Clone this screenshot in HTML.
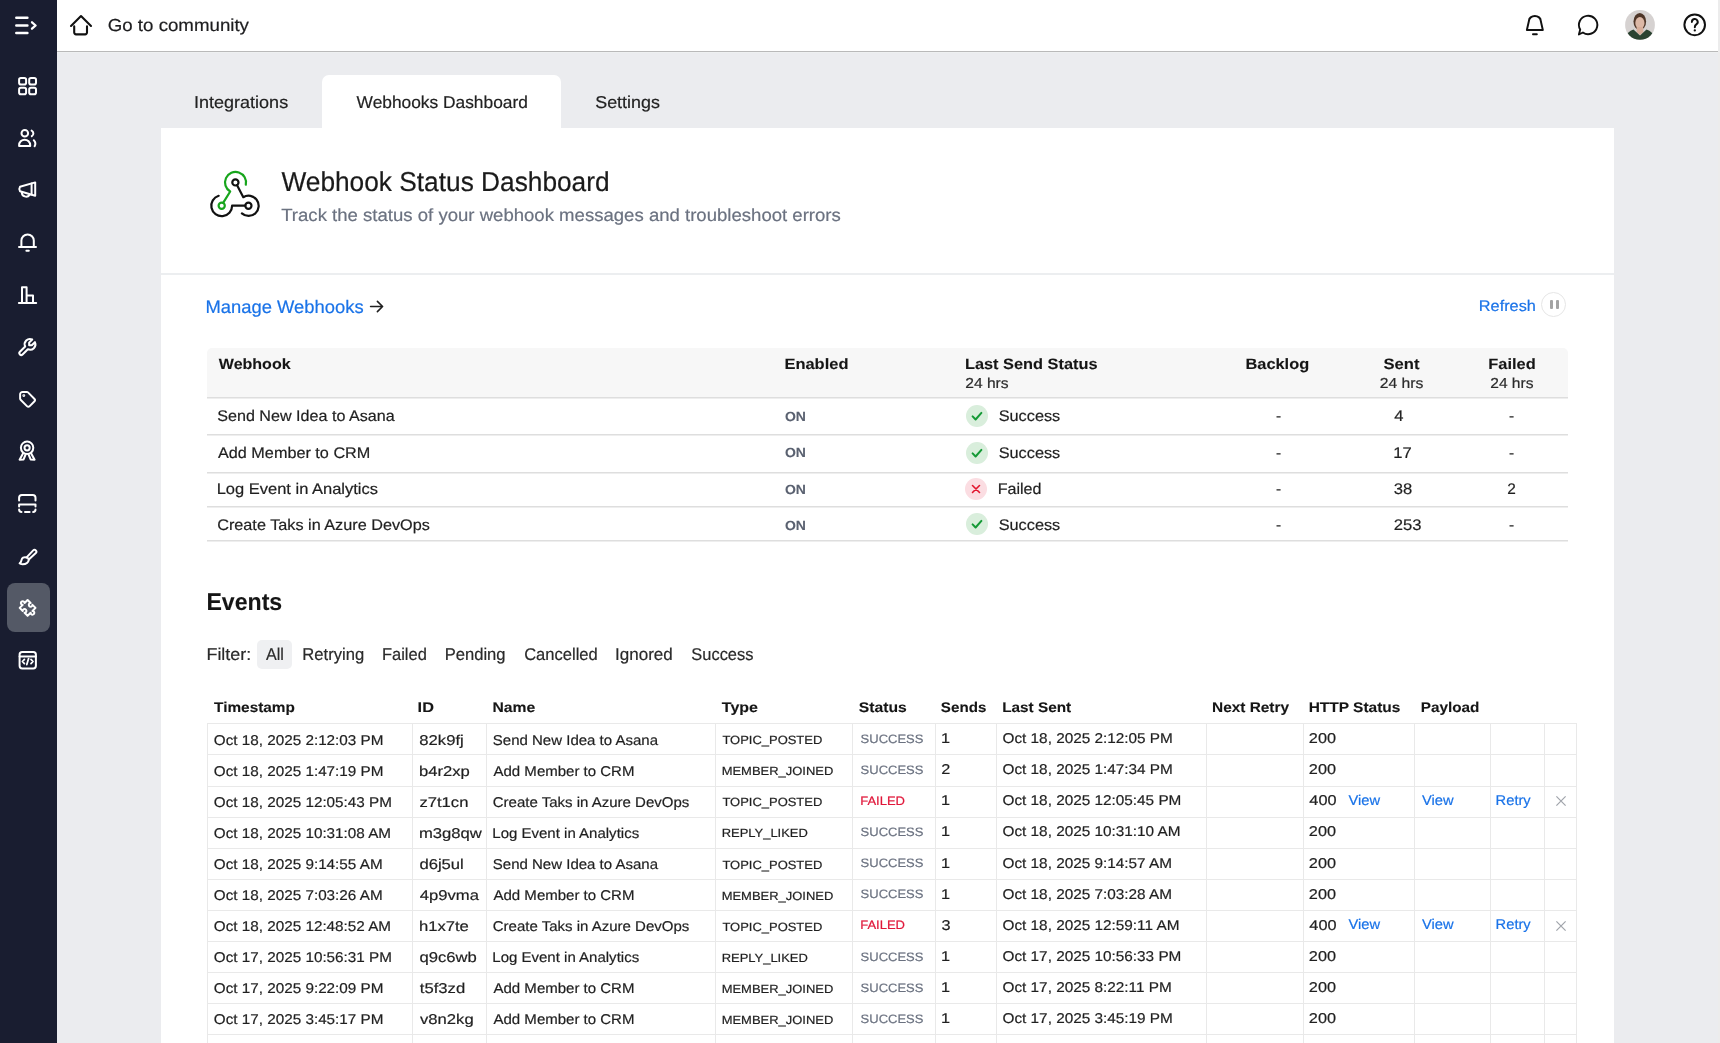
<!DOCTYPE html>
<html><head><meta charset="utf-8"><title>Webhooks Dashboard</title><style>
*{margin:0;padding:0;box-sizing:border-box}
html,body{width:1720px;height:1043px;overflow:hidden;background:#ebecef;font-family:"Liberation Sans", sans-serif;}
.tx{will-change:transform;text-rendering:geometricPrecision;font-family:"Liberation Sans", sans-serif;pointer-events:none}
.r{position:absolute;}
svg{position:absolute;overflow:visible}
</style></head>
<body>
<div class="r" style="left:0px;top:0px;width:57px;height:1043px;background:#191d30"></div>
<div class="r" style="left:7px;top:583px;width:43px;height:49px;background:#545966;border-radius:8px"></div>
<div class="r" style="left:57px;top:0px;width:1663px;height:51px;background:#fff"></div>
<div class="r" style="left:57px;top:51px;width:1663px;height:1px;background:#b9b9b9"></div>
<div class="r" style="left:57px;top:52px;width:1663px;height:1px;background:#eef0f1"></div>
<div class="r" style="left:1718px;top:0px;width:2px;height:1043px;background:#ececec"></div>

<svg style="left:0;top:0" width="57" height="700" viewBox="0 0 57 700"><g fill="none" stroke="#fff" stroke-linecap="round" stroke-linejoin="round" stroke-width="2.5"><path d="M16.3 17.7H27.4M16.3 25.5H27.4M16.3 33H27.4"/><path d="M32 22.3l3.6 3.2-3.6 3.2" stroke-width="2.3"/></g><g fill="none" stroke="#fff" stroke-linecap="round" stroke-linejoin="round" stroke-width="2"><rect x="19.1" y="77.9" width="7" height="6.6" rx="1.8"/><rect x="29.2" y="77.9" width="6.8" height="6.6" rx="1.8"/><rect x="19.1" y="87.7" width="7" height="6.6" rx="1.8"/><rect x="29.2" y="87.7" width="6.8" height="6.6" rx="1.8"/></g><g fill="none" stroke="#fff" stroke-linecap="round" stroke-linejoin="round" stroke-width="2"><circle cx="24.8" cy="133.2" r="3.3"/><path d="M19.1 146.1V145.2A5.55 5.55 0 0 1 30.2 145.2V146.1Z"/><path d="M31.6 130.6A3.2 3.2 0 0 1 31.8 136.2"/><path d="M33.8 140.2A5 5 0 0 1 34.6 146.2"/></g><g fill="none" stroke="#fff" stroke-linecap="round" stroke-linejoin="round" stroke-width="2"><path d="M20 186.8L35.2 182.4V195.8L20 191.3Q18.6 189 20 186.8Z"/><path d="M31.6 183.6V194.6"/><path d="M21.8 192.4A4.3 4.3 0 0 0 29.6 194.8"/></g><g fill="none" stroke="#fff" stroke-linecap="round" stroke-linejoin="round" stroke-width="2"><path d="M21.4 247V240.6A6.2 6.2 0 0 1 33.8 240.6V247"/><path d="M19 247H36"/><path d="M26.4 250.7H28.8"/></g><g fill="none" stroke="#fff" stroke-width="2" stroke-linejoin="round"><path d="M18.9 303.1H36.2" stroke-linecap="round"/><path d="M22 303V287.2H26.6V303"/><path d="M26.6 295.6H33V303"/></g><g transform="translate(27.4 347) scale(-0.88 0.88) translate(-12 -12)" fill="none" stroke="#fff" stroke-linecap="round" stroke-linejoin="round" stroke-width="2.3"><path d="M7 10h3v-3l-3.5 -3.5a6 6 0 0 1 8 8l6 6a2 2 0 0 1 -3 3l-6 -6a6 6 0 0 1 -8 -8l3.5 3.5"/></g><g transform="translate(27.5 399.3) scale(0.82) translate(-12 -12)" fill="none" stroke="#fff" stroke-linecap="round" stroke-linejoin="round" stroke-width="2.4"><circle cx="7.5" cy="7.5" r="0.6" fill="#fff"/><path d="M3 6v5.172a2 2 0 0 0 .586 1.414l7.71 7.71a2.41 2.41 0 0 0 3.408 0l5.592-5.592a2.41 2.41 0 0 0 0-3.408l-7.71-7.71a2 2 0 0 0-1.414-.586h-5.172a3 3 0 0 0-3 3z"/></g><g fill="none" stroke="#fff" stroke-linecap="round" stroke-linejoin="round" stroke-width="2"><circle cx="27.1" cy="447.8" r="6.2"/><circle cx="27.1" cy="447.8" r="2.6"/><path d="M23.4 452.8L19.6 459.7L23.6 459.4L25.4 455"/><path d="M30.8 452.8L34.6 459.7L30.6 459.4L28.8 455"/></g><g fill="none" stroke="#fff" stroke-linecap="round" stroke-linejoin="round" stroke-width="2"><path d="M19.1 500.4V497.8A2.8 2.8 0 0 1 21.9 495H32.7A2.8 2.8 0 0 1 35.5 497.8V500.4"/><path d="M19.1 506.4V504.4H35.5V506.4"/><path d="M19.1 509.6A2.4 2.4 0 0 0 21.5 512M33.1 512A2.4 2.4 0 0 0 35.5 509.6M25 512H29.6"/></g><g fill="none" stroke="#fff" stroke-linecap="round" stroke-linejoin="round" stroke-width="2"><path d="M26.6 557.4L33.2 550.4A1.8 1.8 0 0 1 35.8 553L28.8 559.6"/><path d="M26.6 557.4A3.6 3.6 0 0 1 28.8 559.6Q28.2 564.2 22.6 564.2Q20.2 564 19.6 563.4Q21.2 562.2 21.4 560.4Q22.2 556.4 26.6 557.4Z"/></g><g transform="translate(27.6 607.9) rotate(-45) scale(0.8) translate(-12 -12)" fill="none" stroke="#fff" stroke-linecap="round" stroke-linejoin="round" stroke-width="2.5"><path d="M5 5H10.4A2.3 2.3 0 1 1 13.6 5H19V10.4A2.3 2.3 0 1 0 19 13.6V19H13.6A2.3 2.3 0 1 1 10.4 19H5V13.6A2.3 2.3 0 1 0 5 10.4Z"/></g><g fill="none" stroke="#fff" stroke-linecap="round" stroke-linejoin="round" stroke-width="2"><rect x="19.6" y="652" width="16.3" height="16.4" rx="2.6"/><path d="M19.6 656.4H35.9"/><path d="M24.4 659.4L22.4 661.5L24.4 663.6M31 659.4L33 661.5L31 663.6M28.6 658.6L26.8 664.6" stroke-width="1.8"/></g></svg>
<svg style="left:0;top:0" width="120" height="52" viewBox="0 0 120 52"><g fill="none" stroke="#111" stroke-linecap="round" stroke-linejoin="round" stroke-width="2.1"><path d="M71 26L81 16L91 26"/><path d="M74.2 26.4V32.6A1.8 1.8 0 0 0 76 34.4H85.2A1.8 1.8 0 0 0 87 32.6V26.4"/></g></svg>
<svg style="left:1500px;top:0" width="220" height="52" viewBox="0 0 220 52"><g fill="none" stroke="#111" stroke-linecap="round" stroke-linejoin="round" stroke-width="2"><path d="M26.9 29.9H42.8L40.7 20.6A5.85 4.6 0 0 0 29 20.6Z"/><path d="M33 34.3H36.8"/></g><g fill="none" stroke="#111" stroke-linecap="round" stroke-linejoin="round" stroke-width="1.9"><path d="M82.9 32.5A9.2 9.2 0 1 0 80.2 29.6L78.9 34.5Z"/></g><defs><clipPath id="av"><circle cx="140" cy="24.9" r="14.9"/></clipPath></defs><g clip-path="url(#av)"><rect x="120" y="5" width="40" height="40" fill="#d6d2d1"/><ellipse cx="139.8" cy="21.5" rx="6.3" ry="8.6" fill="#4e3628"/><ellipse cx="139.9" cy="23" rx="4.6" ry="6" fill="#dcb8a6"/><path d="M136.8 27L143 27L143.5 32L140 35L136.5 32Z" fill="#d6ae9a"/><path d="M124 46Q125 31.5 133.5 29.5L140 35.5L146.5 29.5Q155 31.5 156 46Z" fill="#2b4331"/></g><g fill="none" stroke="#111" stroke-linecap="round" stroke-linejoin="round" stroke-width="2"><circle cx="194.7" cy="24.85" r="10.3"/><path d="M191.9 21.9A2.9 2.9 0 1 1 196.3 24.3Q194.8 25.3 194.8 27.3"/></g><circle cx="194.8" cy="30.4" r="1.15" fill="#111"/></svg>
<div class="r" style="left:322px;top:75px;width:239px;height:53px;background:#fff;border-radius:7px 7px 0 0"></div>



<div class="r" style="left:161px;top:128px;width:1453px;height:1000px;background:#fff"></div>
<div class="r" style="left:161px;top:273px;width:1453px;height:2px;background:#eceef0"></div>
<svg style="left:200px;top:165px" width="70" height="60" viewBox="0 0 70 60"><g fill="none" stroke-width="2.2" stroke-linecap="round" stroke-linejoin="round"><path d="M45.8 19.7A10.5 10.5 0 1 0 30.2 26.5L23.3 37.6" stroke="#17a51c"/><circle cx="21.7" cy="40.7" r="3.1" stroke="#17a51c"/><circle cx="35.4" cy="17.4" r="3.1" stroke="#111"/><path d="M37.1 20.3L43.3 32.2A10.1 10.1 0 1 1 41.9 48.4" stroke="#111"/><circle cx="48.4" cy="40.7" r="3.1" stroke="#111"/><path d="M45.3 40.7H32.1A10.4 10.4 0 1 1 18.7 30.8" stroke="#111"/></g></svg>



<svg style="left:368px;top:298px" width="18" height="18" viewBox="0 0 18 18"><path d="M2.6 8.5H14.6M9.4 3.4L14.6 8.5L9.4 13.6" fill="none" stroke="#1f1f1f" stroke-width="1.6" stroke-linecap="round" stroke-linejoin="round"/></svg>

<div class="r" style="left:1540.5px;top:291.5px;width:25px;height:25px;background:#fff;border:1px solid #e6e6e6;border-radius:50%"></div>
<div class="r" style="left:1550px;top:300px;width:3px;height:9px;background:#a3a3a3;border-radius:1px"></div>
<div class="r" style="left:1555.5px;top:300px;width:3px;height:9px;background:#a3a3a3;border-radius:1px"></div>
<div class="r" style="left:207px;top:348px;width:1361px;height:49px;background:#f7f7f7;border-radius:5px 5px 0 0"></div>
<div class="r" style="left:207px;top:397px;width:1361px;height:1px;background:#dedede"></div>
<div class="r" style="left:207px;top:398px;width:1361px;height:1px;background:#eeeeee"></div>
<div class="r" style="left:207px;top:434px;width:1361px;height:1px;background:#dedede"></div>
<div class="r" style="left:207px;top:435px;width:1361px;height:1px;background:#eeeeee"></div>
<div class="r" style="left:207px;top:472px;width:1361px;height:1px;background:#dedede"></div>
<div class="r" style="left:207px;top:473px;width:1361px;height:1px;background:#eeeeee"></div>
<div class="r" style="left:207px;top:506px;width:1361px;height:1px;background:#dedede"></div>
<div class="r" style="left:207px;top:507px;width:1361px;height:1px;background:#eeeeee"></div>
<div class="r" style="left:207px;top:540px;width:1361px;height:1px;background:#dedede"></div>
<div class="r" style="left:207px;top:541px;width:1361px;height:1px;background:#eeeeee"></div>











<svg style="left:966px;top:405px" width="22" height="22" viewBox="0 0 22 22"><circle cx="11" cy="11" r="11" fill="#d9eedc"/><path d="M6.6 11.4l3 3.1 5.8-6.6" fill="none" stroke="#159a36" stroke-width="2" stroke-linecap="round" stroke-linejoin="round"/></svg>






<svg style="left:966px;top:442px" width="22" height="22" viewBox="0 0 22 22"><circle cx="11" cy="11" r="11" fill="#d9eedc"/><path d="M6.6 11.4l3 3.1 5.8-6.6" fill="none" stroke="#159a36" stroke-width="2" stroke-linecap="round" stroke-linejoin="round"/></svg>






<svg style="left:965px;top:478px" width="22" height="22" viewBox="0 0 22 22"><circle cx="11" cy="11" r="11" fill="#fbdde2"/><path d="M7.5 7.5l7 7M14.5 7.5l-7 7" fill="none" stroke="#e2162f" stroke-width="1.6" stroke-linecap="round"/></svg>






<svg style="left:966px;top:513px" width="22" height="22" viewBox="0 0 22 22"><circle cx="11" cy="11" r="11" fill="#d9eedc"/><path d="M6.6 11.4l3 3.1 5.8-6.6" fill="none" stroke="#159a36" stroke-width="2" stroke-linecap="round" stroke-linejoin="round"/></svg>





<div class="r" style="left:257px;top:639.5px;width:35px;height:29px;background:#eff0f2;border-radius:5px"></div>


















<div class="r" style="left:207px;top:723px;width:1370px;height:1px;background:#e9e9e9"></div>
<div class="r" style="left:207px;top:754px;width:1370px;height:1px;background:#e9e9e9"></div>
<div class="r" style="left:207px;top:786px;width:1370px;height:1px;background:#e9e9e9"></div>
<div class="r" style="left:207px;top:817px;width:1370px;height:1px;background:#e9e9e9"></div>
<div class="r" style="left:207px;top:848px;width:1370px;height:1px;background:#e9e9e9"></div>
<div class="r" style="left:207px;top:879px;width:1370px;height:1px;background:#e9e9e9"></div>
<div class="r" style="left:207px;top:910px;width:1370px;height:1px;background:#e9e9e9"></div>
<div class="r" style="left:207px;top:941px;width:1370px;height:1px;background:#e9e9e9"></div>
<div class="r" style="left:207px;top:972px;width:1370px;height:1px;background:#e9e9e9"></div>
<div class="r" style="left:207px;top:1003px;width:1370px;height:1px;background:#e9e9e9"></div>
<div class="r" style="left:207px;top:1034px;width:1370px;height:1px;background:#e9e9e9"></div>
<div class="r" style="left:207px;top:1065px;width:1370px;height:1px;background:#e9e9e9"></div>
<div class="r" style="left:207px;top:723px;width:1px;height:341.9px;background:#e9e9e9"></div>
<div class="r" style="left:412px;top:723px;width:1px;height:341.9px;background:#e9e9e9"></div>
<div class="r" style="left:486px;top:723px;width:1px;height:341.9px;background:#e9e9e9"></div>
<div class="r" style="left:715px;top:723px;width:1px;height:341.9px;background:#e9e9e9"></div>
<div class="r" style="left:852px;top:723px;width:1px;height:341.9px;background:#e9e9e9"></div>
<div class="r" style="left:935px;top:723px;width:1px;height:341.9px;background:#e9e9e9"></div>
<div class="r" style="left:996px;top:723px;width:1px;height:341.9px;background:#e9e9e9"></div>
<div class="r" style="left:1206px;top:723px;width:1px;height:341.9px;background:#e9e9e9"></div>
<div class="r" style="left:1303px;top:723px;width:1px;height:341.9px;background:#e9e9e9"></div>
<div class="r" style="left:1414px;top:723px;width:1px;height:341.9px;background:#e9e9e9"></div>
<div class="r" style="left:1490px;top:723px;width:1px;height:341.9px;background:#e9e9e9"></div>
<div class="r" style="left:1544px;top:723px;width:1px;height:341.9px;background:#e9e9e9"></div>
<div class="r" style="left:1576px;top:723px;width:1px;height:341.9px;background:#e9e9e9"></div>



























<svg style="left:1556px;top:796.1px" width="10" height="10" viewBox="0 0 10 10"><path d="M0.4 0.4l9.2 9.2M9.6 0.4l-9.2 9.2" stroke="#a0a4ab" stroke-width="1.2" fill="none"/></svg>



































<svg style="left:1556px;top:920.5px" width="10" height="10" viewBox="0 0 10 10"><path d="M0.4 0.4l9.2 9.2M9.6 0.4l-9.2 9.2" stroke="#a0a4ab" stroke-width="1.2" fill="none"/></svg>
































<svg class="tx" style="left:0;top:0" width="1720" height="1043" viewBox="0 0 1720 1043"><text x="107.77" y="31.00" font-size="17.40" fill="#1d1d1f" stroke="#1d1d1f" stroke-width="0.2" textLength="141.20" lengthAdjust="spacingAndGlyphs">Go to community</text>
<text x="194.08" y="108.30" font-size="17.20" fill="#222" stroke="#222" stroke-width="0.2" textLength="94.06" lengthAdjust="spacingAndGlyphs">Integrations</text>
<text x="356.61" y="108.30" font-size="17.20" fill="#222" stroke="#222" stroke-width="0.2" textLength="171.24" lengthAdjust="spacingAndGlyphs">Webhooks Dashboard</text>
<text x="595.19" y="108.30" font-size="17.20" fill="#222" stroke="#222" stroke-width="0.2" textLength="64.70" lengthAdjust="spacingAndGlyphs">Settings</text>
<text x="281.47" y="190.80" font-size="27.30" fill="#1a1a1a" stroke="#1a1a1a" stroke-width="0.2" textLength="328.12" lengthAdjust="spacingAndGlyphs">Webhook Status Dashboard</text>
<text x="281.23" y="221.00" font-size="17.60" fill="#6b7280" stroke="#6b7280" stroke-width="0.2" textLength="559.62" lengthAdjust="spacingAndGlyphs">Track the status of your webhook messages and troubleshoot errors</text>
<text x="205.53" y="312.60" font-size="18.10" fill="#1a73e8" stroke="#1a73e8" stroke-width="0.2" textLength="158.08" lengthAdjust="spacingAndGlyphs">Manage Webhooks</text>
<text x="1478.80" y="311.00" font-size="15.40" fill="#1a73e8" stroke="#1a73e8" stroke-width="0.2" textLength="57.09" lengthAdjust="spacingAndGlyphs">Refresh</text>
<text x="218.80" y="368.60" font-size="15.00" fill="#151515" stroke="#151515" stroke-width="0.1" font-weight="700" textLength="71.82" lengthAdjust="spacingAndGlyphs">Webhook</text>
<text x="784.43" y="368.60" font-size="15.00" fill="#151515" stroke="#151515" stroke-width="0.1" font-weight="700" textLength="64.03" lengthAdjust="spacingAndGlyphs">Enabled</text>
<text x="964.94" y="368.60" font-size="15.00" fill="#151515" stroke="#151515" stroke-width="0.1" font-weight="700" textLength="132.56" lengthAdjust="spacingAndGlyphs">Last Send Status</text>
<text x="1245.44" y="368.60" font-size="15.00" fill="#151515" stroke="#151515" stroke-width="0.1" font-weight="700" textLength="63.73" lengthAdjust="spacingAndGlyphs">Backlog</text>
<text x="1383.50" y="368.60" font-size="15.00" fill="#151515" stroke="#151515" stroke-width="0.1" font-weight="700" textLength="36.00" lengthAdjust="spacingAndGlyphs">Sent</text>
<text x="1488.33" y="368.60" font-size="15.00" fill="#151515" stroke="#151515" stroke-width="0.1" font-weight="700" textLength="47.43" lengthAdjust="spacingAndGlyphs">Failed</text>
<text x="965.22" y="388.20" font-size="14.50" fill="#2a2a2a" stroke="#2a2a2a" stroke-width="0.2" textLength="43.42" lengthAdjust="spacingAndGlyphs">24 hrs</text>
<text x="1379.82" y="388.20" font-size="14.50" fill="#2a2a2a" stroke="#2a2a2a" stroke-width="0.2" textLength="43.62" lengthAdjust="spacingAndGlyphs">24 hrs</text>
<text x="1490.22" y="388.20" font-size="14.50" fill="#2a2a2a" stroke="#2a2a2a" stroke-width="0.2" textLength="43.31" lengthAdjust="spacingAndGlyphs">24 hrs</text>
<text x="217.27" y="420.70" font-size="15.40" fill="#1f1f1f" stroke="#1f1f1f" stroke-width="0.2" textLength="177.37" lengthAdjust="spacingAndGlyphs">Send New Idea to Asana</text>
<text x="784.94" y="420.50" font-size="13.20" fill="#5a6170" stroke="#5a6170" stroke-width="0.1" font-weight="700" textLength="20.97" lengthAdjust="spacingAndGlyphs">ON</text>
<text x="998.67" y="420.70" font-size="15.40" fill="#1f1f1f" stroke="#1f1f1f" stroke-width="0.2" textLength="61.59" lengthAdjust="spacingAndGlyphs">Success</text>
<text x="1275.92" y="420.70" font-size="15.40" fill="#1f1f1f" stroke="#1f1f1f" stroke-width="0.2">-</text>
<text x="1394.17" y="420.70" font-size="15.40" fill="#1f1f1f" stroke="#1f1f1f" stroke-width="0.2" textLength="9.25" lengthAdjust="spacingAndGlyphs">4</text>
<text x="1508.92" y="420.70" font-size="15.40" fill="#1f1f1f" stroke="#1f1f1f" stroke-width="0.2">-</text>
<text x="218.00" y="457.60" font-size="15.40" fill="#1f1f1f" stroke="#1f1f1f" stroke-width="0.2" textLength="152.32" lengthAdjust="spacingAndGlyphs">Add Member to CRM</text>
<text x="784.94" y="457.40" font-size="13.20" fill="#5a6170" stroke="#5a6170" stroke-width="0.1" font-weight="700" textLength="20.97" lengthAdjust="spacingAndGlyphs">ON</text>
<text x="998.67" y="457.60" font-size="15.40" fill="#1f1f1f" stroke="#1f1f1f" stroke-width="0.2" textLength="61.59" lengthAdjust="spacingAndGlyphs">Success</text>
<text x="1275.92" y="457.60" font-size="15.40" fill="#1f1f1f" stroke="#1f1f1f" stroke-width="0.2">-</text>
<text x="1393.25" y="457.60" font-size="15.40" fill="#1f1f1f" stroke="#1f1f1f" stroke-width="0.2" textLength="18.50" lengthAdjust="spacingAndGlyphs">17</text>
<text x="1508.92" y="457.60" font-size="15.40" fill="#1f1f1f" stroke="#1f1f1f" stroke-width="0.2">-</text>
<text x="216.68" y="494.00" font-size="15.40" fill="#1f1f1f" stroke="#1f1f1f" stroke-width="0.2" textLength="161.27" lengthAdjust="spacingAndGlyphs">Log Event in Analytics</text>
<text x="784.94" y="493.80" font-size="13.20" fill="#5a6170" stroke="#5a6170" stroke-width="0.1" font-weight="700" textLength="20.97" lengthAdjust="spacingAndGlyphs">ON</text>
<text x="997.71" y="494.00" font-size="15.40" fill="#1f1f1f" stroke="#1f1f1f" stroke-width="0.2" textLength="43.81" lengthAdjust="spacingAndGlyphs">Failed</text>
<text x="1275.92" y="494.00" font-size="15.40" fill="#1f1f1f" stroke="#1f1f1f" stroke-width="0.2">-</text>
<text x="1393.83" y="494.00" font-size="15.40" fill="#1f1f1f" stroke="#1f1f1f" stroke-width="0.2" textLength="18.50" lengthAdjust="spacingAndGlyphs">38</text>
<text x="1507.23" y="494.00" font-size="15.40" fill="#1f1f1f" stroke="#1f1f1f" stroke-width="0.2">2</text>
<text x="217.19" y="530.30" font-size="15.40" fill="#1f1f1f" stroke="#1f1f1f" stroke-width="0.2" textLength="212.66" lengthAdjust="spacingAndGlyphs">Create Taks in Azure DevOps</text>
<text x="784.94" y="530.10" font-size="13.20" fill="#5a6170" stroke="#5a6170" stroke-width="0.1" font-weight="700" textLength="20.97" lengthAdjust="spacingAndGlyphs">ON</text>
<text x="998.67" y="530.30" font-size="15.40" fill="#1f1f1f" stroke="#1f1f1f" stroke-width="0.2" textLength="61.59" lengthAdjust="spacingAndGlyphs">Success</text>
<text x="1275.92" y="530.30" font-size="15.40" fill="#1f1f1f" stroke="#1f1f1f" stroke-width="0.2">-</text>
<text x="1393.67" y="530.30" font-size="15.40" fill="#1f1f1f" stroke="#1f1f1f" stroke-width="0.2" textLength="27.75" lengthAdjust="spacingAndGlyphs">253</text>
<text x="1508.92" y="530.30" font-size="15.40" fill="#1f1f1f" stroke="#1f1f1f" stroke-width="0.2">-</text>
<text x="206.40" y="610.20" font-size="24.20" fill="#151515" stroke="#151515" stroke-width="0.1" font-weight="700" textLength="75.81" lengthAdjust="spacingAndGlyphs">Events</text>
<text x="206.47" y="660.00" font-size="17.00" fill="#2a2a2a" stroke="#2a2a2a" stroke-width="0.2" textLength="44.73" lengthAdjust="spacingAndGlyphs">Filter:</text>
<text x="266.00" y="660.00" font-size="17.00" fill="#2a2a2a" stroke="#2a2a2a" stroke-width="0.2" textLength="17.87" lengthAdjust="spacingAndGlyphs">All</text>
<text x="302.37" y="660.00" font-size="17.00" fill="#2a2a2a" stroke="#2a2a2a" stroke-width="0.2" textLength="61.89" lengthAdjust="spacingAndGlyphs">Retrying</text>
<text x="381.98" y="660.00" font-size="17.00" fill="#2a2a2a" stroke="#2a2a2a" stroke-width="0.2" textLength="44.87" lengthAdjust="spacingAndGlyphs">Failed</text>
<text x="444.67" y="660.00" font-size="17.00" fill="#2a2a2a" stroke="#2a2a2a" stroke-width="0.2" textLength="60.91" lengthAdjust="spacingAndGlyphs">Pending</text>
<text x="524.17" y="660.00" font-size="17.00" fill="#2a2a2a" stroke="#2a2a2a" stroke-width="0.2" textLength="73.64" lengthAdjust="spacingAndGlyphs">Cancelled</text>
<text x="615.07" y="660.00" font-size="17.00" fill="#2a2a2a" stroke="#2a2a2a" stroke-width="0.2">Ignored</text>
<text x="691.36" y="660.00" font-size="17.00" fill="#2a2a2a" stroke="#2a2a2a" stroke-width="0.2" textLength="62.00" lengthAdjust="spacingAndGlyphs">Success</text>
<text x="214.05" y="712.10" font-size="14.00" fill="#151515" stroke="#151515" stroke-width="0.1" font-weight="700" textLength="80.89" lengthAdjust="spacingAndGlyphs">Timestamp</text>
<text x="417.64" y="712.10" font-size="14.00" fill="#151515" stroke="#151515" stroke-width="0.1" font-weight="700" textLength="16.31" lengthAdjust="spacingAndGlyphs">ID</text>
<text x="492.48" y="712.10" font-size="14.00" fill="#151515" stroke="#151515" stroke-width="0.1" font-weight="700" textLength="42.75" lengthAdjust="spacingAndGlyphs">Name</text>
<text x="721.84" y="712.10" font-size="14.00" fill="#151515" stroke="#151515" stroke-width="0.1" font-weight="700" textLength="36.12" lengthAdjust="spacingAndGlyphs">Type</text>
<text x="858.83" y="712.10" font-size="14.00" fill="#151515" stroke="#151515" stroke-width="0.1" font-weight="700" textLength="48.02" lengthAdjust="spacingAndGlyphs">Status</text>
<text x="940.85" y="712.10" font-size="14.00" fill="#151515" stroke="#151515" stroke-width="0.1" font-weight="700" textLength="45.48" lengthAdjust="spacingAndGlyphs">Sends</text>
<text x="1002.20" y="712.10" font-size="14.00" fill="#151515" stroke="#151515" stroke-width="0.1" font-weight="700" textLength="68.96" lengthAdjust="spacingAndGlyphs">Last Sent</text>
<text x="1212.10" y="712.10" font-size="14.00" fill="#151515" stroke="#151515" stroke-width="0.1" font-weight="700" textLength="76.91" lengthAdjust="spacingAndGlyphs">Next Retry</text>
<text x="1308.69" y="712.10" font-size="14.00" fill="#151515" stroke="#151515" stroke-width="0.1" font-weight="700" textLength="91.75" lengthAdjust="spacingAndGlyphs">HTTP Status</text>
<text x="1420.71" y="712.10" font-size="14.00" fill="#151515" stroke="#151515" stroke-width="0.1" font-weight="700" textLength="58.69" lengthAdjust="spacingAndGlyphs">Payload</text>
<text x="213.81" y="744.50" font-size="14.20" fill="#1f1f1f" stroke="#1f1f1f" stroke-width="0.2" textLength="169.66" lengthAdjust="spacingAndGlyphs">Oct 18, 2025 2:12:03 PM</text>
<text x="419.35" y="744.50" font-size="14.20" fill="#1f1f1f" stroke="#1f1f1f" stroke-width="0.2" textLength="44.39" lengthAdjust="spacingAndGlyphs">82k9fj</text>
<text x="492.82" y="744.50" font-size="14.20" fill="#1f1f1f" stroke="#1f1f1f" stroke-width="0.2" textLength="165.22" lengthAdjust="spacingAndGlyphs">Send New Idea to Asana</text>
<text x="722.44" y="744.10" font-size="12.00" fill="#1f1f1f" stroke="#1f1f1f" stroke-width="0.2" textLength="99.85" lengthAdjust="spacingAndGlyphs">TOPIC_POSTED</text>
<text x="860.61" y="742.80" font-size="12.20" fill="#6b7280" stroke="#6b7280" stroke-width="0.2" textLength="62.86" lengthAdjust="spacingAndGlyphs">SUCCESS</text>
<text x="940.98" y="743.10" font-size="14.20" fill="#1f1f1f" stroke="#1f1f1f" stroke-width="0.2" textLength="9.05" lengthAdjust="spacingAndGlyphs">1</text>
<text x="1002.51" y="743.10" font-size="14.20" fill="#1f1f1f" stroke="#1f1f1f" stroke-width="0.2" textLength="170.36" lengthAdjust="spacingAndGlyphs">Oct 18, 2025 2:12:05 PM</text>
<text x="1308.89" y="743.10" font-size="14.20" fill="#1f1f1f" stroke="#1f1f1f" stroke-width="0.2" textLength="27.14" lengthAdjust="spacingAndGlyphs">200</text>
<text x="213.81" y="775.60" font-size="14.20" fill="#1f1f1f" stroke="#1f1f1f" stroke-width="0.2" textLength="169.66" lengthAdjust="spacingAndGlyphs">Oct 18, 2025 1:47:19 PM</text>
<text x="419.02" y="775.60" font-size="14.20" fill="#1f1f1f" stroke="#1f1f1f" stroke-width="0.2" textLength="50.86" lengthAdjust="spacingAndGlyphs">b4r2xp</text>
<text x="493.50" y="775.60" font-size="14.20" fill="#1f1f1f" stroke="#1f1f1f" stroke-width="0.2" textLength="140.96" lengthAdjust="spacingAndGlyphs">Add Member to CRM</text>
<text x="721.66" y="775.20" font-size="12.00" fill="#1f1f1f" stroke="#1f1f1f" stroke-width="0.2" textLength="111.60" lengthAdjust="spacingAndGlyphs">MEMBER_JOINED</text>
<text x="860.61" y="773.90" font-size="12.20" fill="#6b7280" stroke="#6b7280" stroke-width="0.2" textLength="62.86" lengthAdjust="spacingAndGlyphs">SUCCESS</text>
<text x="941.39" y="774.20" font-size="14.20" fill="#1f1f1f" stroke="#1f1f1f" stroke-width="0.2" textLength="9.05" lengthAdjust="spacingAndGlyphs">2</text>
<text x="1002.51" y="774.20" font-size="14.20" fill="#1f1f1f" stroke="#1f1f1f" stroke-width="0.2" textLength="170.36" lengthAdjust="spacingAndGlyphs">Oct 18, 2025 1:47:34 PM</text>
<text x="1308.89" y="774.20" font-size="14.20" fill="#1f1f1f" stroke="#1f1f1f" stroke-width="0.2" textLength="27.14" lengthAdjust="spacingAndGlyphs">200</text>
<text x="213.81" y="806.70" font-size="14.20" fill="#1f1f1f" stroke="#1f1f1f" stroke-width="0.2" textLength="178.14" lengthAdjust="spacingAndGlyphs">Oct 18, 2025 12:05:43 PM</text>
<text x="419.43" y="806.70" font-size="14.20" fill="#1f1f1f" stroke="#1f1f1f" stroke-width="0.2" textLength="49.01" lengthAdjust="spacingAndGlyphs">z7t1cn</text>
<text x="492.75" y="806.70" font-size="14.20" fill="#1f1f1f" stroke="#1f1f1f" stroke-width="0.2" textLength="196.60" lengthAdjust="spacingAndGlyphs">Create Taks in Azure DevOps</text>
<text x="722.44" y="806.30" font-size="12.00" fill="#1f1f1f" stroke="#1f1f1f" stroke-width="0.2" textLength="99.85" lengthAdjust="spacingAndGlyphs">TOPIC_POSTED</text>
<text x="860.16" y="805.00" font-size="12.20" fill="#e0173a" stroke="#e0173a" stroke-width="0.2" textLength="44.81" lengthAdjust="spacingAndGlyphs">FAILED</text>
<text x="940.98" y="805.30" font-size="14.20" fill="#1f1f1f" stroke="#1f1f1f" stroke-width="0.2" textLength="9.05" lengthAdjust="spacingAndGlyphs">1</text>
<text x="1002.51" y="805.30" font-size="14.20" fill="#1f1f1f" stroke="#1f1f1f" stroke-width="0.2" textLength="178.89" lengthAdjust="spacingAndGlyphs">Oct 18, 2025 12:05:45 PM</text>
<text x="1309.37" y="805.30" font-size="14.20" fill="#1f1f1f" stroke="#1f1f1f" stroke-width="0.2" textLength="27.14" lengthAdjust="spacingAndGlyphs">400</text>
<text x="1348.43" y="804.60" font-size="14.20" fill="#1a73e8" stroke="#1a73e8" stroke-width="0.2" textLength="31.57" lengthAdjust="spacingAndGlyphs">View</text>
<text x="1421.93" y="804.60" font-size="14.20" fill="#1a73e8" stroke="#1a73e8" stroke-width="0.2" textLength="31.57" lengthAdjust="spacingAndGlyphs">View</text>
<text x="1495.63" y="804.60" font-size="14.20" fill="#1a73e8" stroke="#1a73e8" stroke-width="0.2" textLength="35.09" lengthAdjust="spacingAndGlyphs">Retry</text>
<text x="213.81" y="837.80" font-size="14.20" fill="#1f1f1f" stroke="#1f1f1f" stroke-width="0.2" textLength="177.30" lengthAdjust="spacingAndGlyphs">Oct 18, 2025 10:31:08 AM</text>
<text x="419.02" y="837.80" font-size="14.20" fill="#1f1f1f" stroke="#1f1f1f" stroke-width="0.2" textLength="62.87" lengthAdjust="spacingAndGlyphs">m3g8qw</text>
<text x="492.30" y="837.80" font-size="14.20" fill="#1f1f1f" stroke="#1f1f1f" stroke-width="0.2" textLength="146.85" lengthAdjust="spacingAndGlyphs">Log Event in Analytics</text>
<text x="721.66" y="837.40" font-size="12.00" fill="#1f1f1f" stroke="#1f1f1f" stroke-width="0.2" textLength="86.19" lengthAdjust="spacingAndGlyphs">REPLY_LIKED</text>
<text x="860.61" y="836.10" font-size="12.20" fill="#6b7280" stroke="#6b7280" stroke-width="0.2" textLength="62.86" lengthAdjust="spacingAndGlyphs">SUCCESS</text>
<text x="940.98" y="836.40" font-size="14.20" fill="#1f1f1f" stroke="#1f1f1f" stroke-width="0.2" textLength="9.05" lengthAdjust="spacingAndGlyphs">1</text>
<text x="1002.51" y="836.40" font-size="14.20" fill="#1f1f1f" stroke="#1f1f1f" stroke-width="0.2" textLength="178.04" lengthAdjust="spacingAndGlyphs">Oct 18, 2025 10:31:10 AM</text>
<text x="1308.89" y="836.40" font-size="14.20" fill="#1f1f1f" stroke="#1f1f1f" stroke-width="0.2" textLength="27.14" lengthAdjust="spacingAndGlyphs">200</text>
<text x="213.81" y="868.90" font-size="14.20" fill="#1f1f1f" stroke="#1f1f1f" stroke-width="0.2" textLength="168.81" lengthAdjust="spacingAndGlyphs">Oct 18, 2025 9:14:55 AM</text>
<text x="419.43" y="868.90" font-size="14.20" fill="#1f1f1f" stroke="#1f1f1f" stroke-width="0.2" textLength="44.40" lengthAdjust="spacingAndGlyphs">d6j5ul</text>
<text x="492.82" y="868.90" font-size="14.20" fill="#1f1f1f" stroke="#1f1f1f" stroke-width="0.2" textLength="165.22" lengthAdjust="spacingAndGlyphs">Send New Idea to Asana</text>
<text x="722.44" y="868.50" font-size="12.00" fill="#1f1f1f" stroke="#1f1f1f" stroke-width="0.2" textLength="99.85" lengthAdjust="spacingAndGlyphs">TOPIC_POSTED</text>
<text x="860.61" y="867.20" font-size="12.20" fill="#6b7280" stroke="#6b7280" stroke-width="0.2" textLength="62.86" lengthAdjust="spacingAndGlyphs">SUCCESS</text>
<text x="940.98" y="867.50" font-size="14.20" fill="#1f1f1f" stroke="#1f1f1f" stroke-width="0.2" textLength="9.05" lengthAdjust="spacingAndGlyphs">1</text>
<text x="1002.51" y="867.50" font-size="14.20" fill="#1f1f1f" stroke="#1f1f1f" stroke-width="0.2" textLength="169.52" lengthAdjust="spacingAndGlyphs">Oct 18, 2025 9:14:57 AM</text>
<text x="1308.89" y="867.50" font-size="14.20" fill="#1f1f1f" stroke="#1f1f1f" stroke-width="0.2" textLength="27.14" lengthAdjust="spacingAndGlyphs">200</text>
<text x="213.81" y="900.00" font-size="14.20" fill="#1f1f1f" stroke="#1f1f1f" stroke-width="0.2" textLength="168.81" lengthAdjust="spacingAndGlyphs">Oct 18, 2025 7:03:26 AM</text>
<text x="419.77" y="900.00" font-size="14.20" fill="#1f1f1f" stroke="#1f1f1f" stroke-width="0.2" textLength="59.18" lengthAdjust="spacingAndGlyphs">4p9vma</text>
<text x="493.50" y="900.00" font-size="14.20" fill="#1f1f1f" stroke="#1f1f1f" stroke-width="0.2" textLength="140.96" lengthAdjust="spacingAndGlyphs">Add Member to CRM</text>
<text x="721.66" y="899.60" font-size="12.00" fill="#1f1f1f" stroke="#1f1f1f" stroke-width="0.2" textLength="111.60" lengthAdjust="spacingAndGlyphs">MEMBER_JOINED</text>
<text x="860.61" y="898.30" font-size="12.20" fill="#6b7280" stroke="#6b7280" stroke-width="0.2" textLength="62.86" lengthAdjust="spacingAndGlyphs">SUCCESS</text>
<text x="940.98" y="898.60" font-size="14.20" fill="#1f1f1f" stroke="#1f1f1f" stroke-width="0.2" textLength="9.05" lengthAdjust="spacingAndGlyphs">1</text>
<text x="1002.51" y="898.60" font-size="14.20" fill="#1f1f1f" stroke="#1f1f1f" stroke-width="0.2" textLength="169.52" lengthAdjust="spacingAndGlyphs">Oct 18, 2025 7:03:28 AM</text>
<text x="1308.89" y="898.60" font-size="14.20" fill="#1f1f1f" stroke="#1f1f1f" stroke-width="0.2" textLength="27.14" lengthAdjust="spacingAndGlyphs">200</text>
<text x="213.81" y="931.10" font-size="14.20" fill="#1f1f1f" stroke="#1f1f1f" stroke-width="0.2" textLength="177.30" lengthAdjust="spacingAndGlyphs">Oct 18, 2025 12:48:52 AM</text>
<text x="418.94" y="931.10" font-size="14.20" fill="#1f1f1f" stroke="#1f1f1f" stroke-width="0.2" textLength="49.94" lengthAdjust="spacingAndGlyphs">h1x7te</text>
<text x="492.75" y="931.10" font-size="14.20" fill="#1f1f1f" stroke="#1f1f1f" stroke-width="0.2" textLength="196.60" lengthAdjust="spacingAndGlyphs">Create Taks in Azure DevOps</text>
<text x="722.44" y="930.70" font-size="12.00" fill="#1f1f1f" stroke="#1f1f1f" stroke-width="0.2" textLength="99.85" lengthAdjust="spacingAndGlyphs">TOPIC_POSTED</text>
<text x="860.16" y="929.40" font-size="12.20" fill="#e0173a" stroke="#e0173a" stroke-width="0.2" textLength="44.81" lengthAdjust="spacingAndGlyphs">FAILED</text>
<text x="941.55" y="929.70" font-size="14.20" fill="#1f1f1f" stroke="#1f1f1f" stroke-width="0.2" textLength="9.05" lengthAdjust="spacingAndGlyphs">3</text>
<text x="1002.51" y="929.70" font-size="14.20" fill="#1f1f1f" stroke="#1f1f1f" stroke-width="0.2" textLength="176.90" lengthAdjust="spacingAndGlyphs">Oct 18, 2025 12:59:11 AM</text>
<text x="1309.37" y="929.70" font-size="14.20" fill="#1f1f1f" stroke="#1f1f1f" stroke-width="0.2" textLength="27.14" lengthAdjust="spacingAndGlyphs">400</text>
<text x="1348.43" y="929.00" font-size="14.20" fill="#1a73e8" stroke="#1a73e8" stroke-width="0.2" textLength="31.57" lengthAdjust="spacingAndGlyphs">View</text>
<text x="1421.93" y="929.00" font-size="14.20" fill="#1a73e8" stroke="#1a73e8" stroke-width="0.2" textLength="31.57" lengthAdjust="spacingAndGlyphs">View</text>
<text x="1495.63" y="929.00" font-size="14.20" fill="#1a73e8" stroke="#1a73e8" stroke-width="0.2" textLength="35.09" lengthAdjust="spacingAndGlyphs">Retry</text>
<text x="213.81" y="962.20" font-size="14.20" fill="#1f1f1f" stroke="#1f1f1f" stroke-width="0.2" textLength="178.14" lengthAdjust="spacingAndGlyphs">Oct 17, 2025 10:56:31 PM</text>
<text x="419.43" y="962.20" font-size="14.20" fill="#1f1f1f" stroke="#1f1f1f" stroke-width="0.2" textLength="57.33" lengthAdjust="spacingAndGlyphs">q9c6wb</text>
<text x="492.30" y="962.20" font-size="14.20" fill="#1f1f1f" stroke="#1f1f1f" stroke-width="0.2" textLength="146.85" lengthAdjust="spacingAndGlyphs">Log Event in Analytics</text>
<text x="721.66" y="961.80" font-size="12.00" fill="#1f1f1f" stroke="#1f1f1f" stroke-width="0.2" textLength="86.19" lengthAdjust="spacingAndGlyphs">REPLY_LIKED</text>
<text x="860.61" y="960.50" font-size="12.20" fill="#6b7280" stroke="#6b7280" stroke-width="0.2" textLength="62.86" lengthAdjust="spacingAndGlyphs">SUCCESS</text>
<text x="940.98" y="960.80" font-size="14.20" fill="#1f1f1f" stroke="#1f1f1f" stroke-width="0.2" textLength="9.05" lengthAdjust="spacingAndGlyphs">1</text>
<text x="1002.51" y="960.80" font-size="14.20" fill="#1f1f1f" stroke="#1f1f1f" stroke-width="0.2" textLength="178.89" lengthAdjust="spacingAndGlyphs">Oct 17, 2025 10:56:33 PM</text>
<text x="1308.89" y="960.80" font-size="14.20" fill="#1f1f1f" stroke="#1f1f1f" stroke-width="0.2" textLength="27.14" lengthAdjust="spacingAndGlyphs">200</text>
<text x="213.81" y="993.30" font-size="14.20" fill="#1f1f1f" stroke="#1f1f1f" stroke-width="0.2" textLength="169.66" lengthAdjust="spacingAndGlyphs">Oct 17, 2025 9:22:09 PM</text>
<text x="419.85" y="993.30" font-size="14.20" fill="#1f1f1f" stroke="#1f1f1f" stroke-width="0.2" textLength="45.31" lengthAdjust="spacingAndGlyphs">t5f3zd</text>
<text x="493.50" y="993.30" font-size="14.20" fill="#1f1f1f" stroke="#1f1f1f" stroke-width="0.2" textLength="140.96" lengthAdjust="spacingAndGlyphs">Add Member to CRM</text>
<text x="721.66" y="992.90" font-size="12.00" fill="#1f1f1f" stroke="#1f1f1f" stroke-width="0.2" textLength="111.60" lengthAdjust="spacingAndGlyphs">MEMBER_JOINED</text>
<text x="860.61" y="991.60" font-size="12.20" fill="#6b7280" stroke="#6b7280" stroke-width="0.2" textLength="62.86" lengthAdjust="spacingAndGlyphs">SUCCESS</text>
<text x="940.98" y="991.90" font-size="14.20" fill="#1f1f1f" stroke="#1f1f1f" stroke-width="0.2" textLength="9.05" lengthAdjust="spacingAndGlyphs">1</text>
<text x="1002.51" y="991.90" font-size="14.20" fill="#1f1f1f" stroke="#1f1f1f" stroke-width="0.2" textLength="169.23" lengthAdjust="spacingAndGlyphs">Oct 17, 2025 8:22:11 PM</text>
<text x="1308.89" y="991.90" font-size="14.20" fill="#1f1f1f" stroke="#1f1f1f" stroke-width="0.2" textLength="27.14" lengthAdjust="spacingAndGlyphs">200</text>
<text x="213.81" y="1024.40" font-size="14.20" fill="#1f1f1f" stroke="#1f1f1f" stroke-width="0.2" textLength="169.66" lengthAdjust="spacingAndGlyphs">Oct 17, 2025 3:45:17 PM</text>
<text x="420.02" y="1024.40" font-size="14.20" fill="#1f1f1f" stroke="#1f1f1f" stroke-width="0.2" textLength="53.64" lengthAdjust="spacingAndGlyphs">v8n2kg</text>
<text x="493.50" y="1024.40" font-size="14.20" fill="#1f1f1f" stroke="#1f1f1f" stroke-width="0.2" textLength="140.96" lengthAdjust="spacingAndGlyphs">Add Member to CRM</text>
<text x="721.66" y="1024.00" font-size="12.00" fill="#1f1f1f" stroke="#1f1f1f" stroke-width="0.2" textLength="111.60" lengthAdjust="spacingAndGlyphs">MEMBER_JOINED</text>
<text x="860.61" y="1022.70" font-size="12.20" fill="#6b7280" stroke="#6b7280" stroke-width="0.2" textLength="62.86" lengthAdjust="spacingAndGlyphs">SUCCESS</text>
<text x="940.98" y="1023.00" font-size="14.20" fill="#1f1f1f" stroke="#1f1f1f" stroke-width="0.2" textLength="9.05" lengthAdjust="spacingAndGlyphs">1</text>
<text x="1002.51" y="1023.00" font-size="14.20" fill="#1f1f1f" stroke="#1f1f1f" stroke-width="0.2" textLength="170.36" lengthAdjust="spacingAndGlyphs">Oct 17, 2025 3:45:19 PM</text>
<text x="1308.89" y="1023.00" font-size="14.20" fill="#1f1f1f" stroke="#1f1f1f" stroke-width="0.2" textLength="27.14" lengthAdjust="spacingAndGlyphs">200</text>
<text x="213.81" y="1055.50" font-size="14.20" fill="#1f1f1f" stroke="#1f1f1f" stroke-width="0.2" textLength="169.66" lengthAdjust="spacingAndGlyphs">Oct 17, 2025 1:12:44 PM</text>
<text x="419.02" y="1055.50" font-size="14.20" fill="#1f1f1f" stroke="#1f1f1f" stroke-width="0.2" textLength="50.84" lengthAdjust="spacingAndGlyphs">k2m8rt</text>
<text x="492.82" y="1055.50" font-size="14.20" fill="#1f1f1f" stroke="#1f1f1f" stroke-width="0.2" textLength="165.22" lengthAdjust="spacingAndGlyphs">Send New Idea to Asana</text>
<text x="722.44" y="1055.10" font-size="12.00" fill="#1f1f1f" stroke="#1f1f1f" stroke-width="0.2" textLength="99.85" lengthAdjust="spacingAndGlyphs">TOPIC_POSTED</text>
<text x="860.61" y="1053.80" font-size="12.20" fill="#6b7280" stroke="#6b7280" stroke-width="0.2" textLength="62.86" lengthAdjust="spacingAndGlyphs">SUCCESS</text>
<text x="940.98" y="1054.10" font-size="14.20" fill="#1f1f1f" stroke="#1f1f1f" stroke-width="0.2" textLength="9.05" lengthAdjust="spacingAndGlyphs">1</text>
<text x="1002.51" y="1054.10" font-size="14.20" fill="#1f1f1f" stroke="#1f1f1f" stroke-width="0.2" textLength="170.36" lengthAdjust="spacingAndGlyphs">Oct 17, 2025 1:12:46 PM</text>
<text x="1308.89" y="1054.10" font-size="14.20" fill="#1f1f1f" stroke="#1f1f1f" stroke-width="0.2" textLength="27.14" lengthAdjust="spacingAndGlyphs">200</text></svg>
</body></html>
